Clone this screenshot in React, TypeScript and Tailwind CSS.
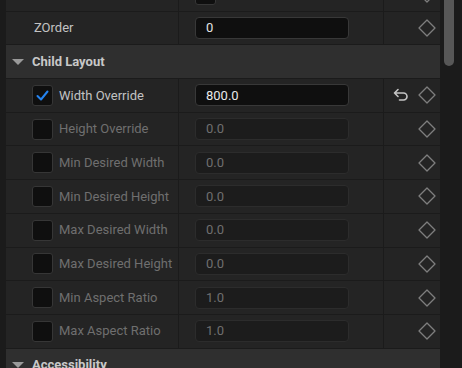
import React from "react";

type Prop = {
  label: string;
  value: string;
  enabled?: boolean;
  checked?: boolean;
  reset?: boolean;
};

const ROWS: Prop[] = [
  { label: "Width Override", value: "800.0", enabled: true, checked: true, reset: true },
  { label: "Height Override", value: "0.0" },
  { label: "Min Desired Width", value: "0.0" },
  { label: "Min Desired Height", value: "0.0" },
  { label: "Max Desired Width", value: "0.0" },
  { label: "Max Desired Height", value: "0.0" },
  { label: "Min Aspect Ratio", value: "1.0" },
  { label: "Max Aspect Ratio", value: "1.0" },
];

function Diamond() {
  return (
    <svg width="18" height="18" viewBox="0 0 18 18" className="shrink-0">
      <polygon
        points="9,1 17,9 9,17 1,9"
        fill="none"
        stroke="#7e7e7e"
        strokeWidth="1.3"
        strokeLinejoin="round"
      />
    </svg>
  );
}

function ResetArrow() {
  return (
    <svg width="16" height="14" viewBox="0 0 16 14" className="shrink-0">
      <path
        d="M5 1.5 L1.5 5 L5 8.5 M1.5 5 H10.5 A3.5 3.5 0 0 1 10.5 12 H6.5"
        fill="none"
        stroke="#c4c4c4"
        strokeWidth="1.6"
        strokeLinecap="round"
        strokeLinejoin="round"
      />
    </svg>
  );
}

function Check({ checked }: { checked?: boolean }) {
  return (
    <div className="flex h-[21px] w-[21px] shrink-0 items-center justify-center rounded-[3px] border border-[#363636] bg-[#0f0f0f]">
      {checked && (
        <svg width="15" height="15" viewBox="0 0 15 15">
          <path
            d="M2.5 8 L6 11.5 L12.5 3.5"
            fill="none"
            stroke="#2483f0"
            strokeWidth="2"
            strokeLinecap="round"
            strokeLinejoin="round"
          />
        </svg>
      )}
    </div>
  );
}

function Header({ title }: { title: string }) {
  return (
    <div className="flex h-[33.7px] shrink-0 items-center border-b border-[#1b1b1b] bg-[#2f2f2f]">
      <div className="ml-[6px] mr-[8px] h-0 w-0 border-x-[6.5px] border-t-[6.5px] border-x-transparent border-t-[#9a9a9a]" />
      <span className="text-[13px] font-bold text-[#c8c8c8]">{title}</span>
    </div>
  );
}

export default function App() {
  return (
    <div
      className="flex h-[368px] w-[462px] overflow-hidden bg-[#1b1b1b]"
      style={{ fontFamily: "Roboto, 'Liberation Sans', sans-serif" }}
    >
      <div className="w-[6px] shrink-0" />
      <div className="flex w-[434px] shrink-0 flex-col">
        {/* partially scrolled row */}
        <div className="mt-[-22px] flex h-[33.7px] shrink-0 border-b border-[#1b1b1b] bg-[#242424]">
          <div className="w-[173px] shrink-0 border-r border-[#1b1b1b]" />
          <div className="flex w-[205px] shrink-0 items-center border-r border-[#1b1b1b] pl-[16px]">
            <div className="h-[21px] w-[21px] rounded-[3px] border border-[#363636] bg-[#0f0f0f]" />
          </div>
          <div className="flex flex-1 items-center justify-end gap-[9px] pr-[4px]">
            <ResetArrow />
            <Diamond />
          </div>
        </div>

        <div className="flex h-[33.7px] shrink-0 border-b border-[#1b1b1b] bg-[#242424]">
          <div className="flex w-[173px] shrink-0 items-center border-r border-[#1b1b1b] pl-[28px] text-[13px] text-[#c2c2c2]">
            ZOrder
          </div>
          <div className="flex w-[205px] shrink-0 items-center border-r border-[#1b1b1b] pl-[16px]">
            <div className="flex h-[22px] w-[154px] items-center rounded-[4px] border border-[#383838] bg-[#0f0f0f] pl-[10px] text-[13px] text-[#e4e4e4]">
              0
            </div>
          </div>
          <div className="flex flex-1 items-center justify-end pr-[4px]">
            <Diamond />
          </div>
        </div>

        <Header title="Child Layout" />

        {ROWS.map((r) => (
          <div
            key={r.label}
            className="flex h-[33.7px] shrink-0 border-b border-[#1b1b1b] bg-[#242424] last:border-b-2"
          >
            <div className="flex w-[173px] shrink-0 items-center gap-[6px] border-r border-[#1b1b1b] pl-[26px]">
              <Check checked={r.checked} />
              <span
                className={`text-[13px] ${r.enabled ? "text-[#c2c2c2]" : "text-[#6f6f6f]"}`}
              >
                {r.label}
              </span>
            </div>
            <div className="flex w-[205px] shrink-0 items-center border-r border-[#1b1b1b] pl-[16px]">
              <div
                className={`flex h-[22px] w-[154px] items-center rounded-[4px] border pl-[10px] text-[13px] ${
                  r.enabled
                    ? "border-[#383838] bg-[#0f0f0f] text-[#e8e8e8]"
                    : "border-[#2c2c2c] bg-[#1c1c1c] text-[#6f6f6f]"
                }`}
              >
                {r.value}
              </div>
            </div>
            <div className="flex flex-1 items-center justify-end gap-[9px] pr-[4px]">
              {r.reset && <ResetArrow />}
              <Diamond />
            </div>
          </div>
        ))}

        <Header title="Accessibility" />
      </div>
      <div className="relative w-[22px] shrink-0 bg-[#1b1b1b]">
        <div className="absolute left-[4px] top-0 h-[66px] w-[10px] rounded-b-[5px] bg-[#575757]" />
      </div>
    </div>
  );
}
